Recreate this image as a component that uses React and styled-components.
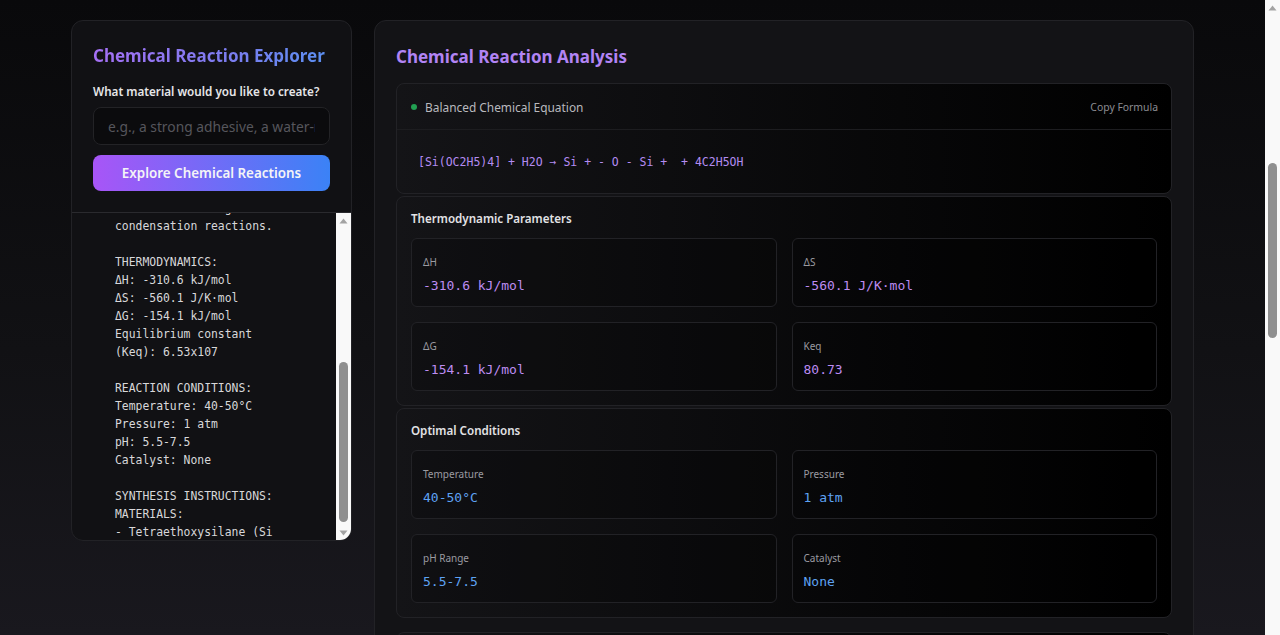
import React, { useLayoutEffect, useRef } from 'react';
import styled, { createGlobalStyle } from 'styled-components';

const GlobalStyle = createGlobalStyle`
  html, body {
    margin: 0;
    padding: 0;
    overflow: hidden;
  }
  body {
    background: #0d0d10;
    font-family: "Noto Sans", "Open Sans", sans-serif;
    color: #e4e4e7;
  }
`;

const outputText = [
  'MATERIAL: Silica Gel',
  '',
  'REACTION TYPE:',
  'Sol-gel process',
  '',
  'BALANCED EQUATION:',
  '[Si(OC2H5)4] + H2O → Si',
  '+ - O - Si +  + 4C2H5OH',
  '',
  'EXPLANATION:',
  'Tetraethoxysilane (TEOS)',
  'reacts with water to',
  'form cross-linked',
  'silica (Si-O-Si)',
  'structures through',
  'condensation reactions.',
  '',
  'THERMODYNAMICS:',
  'ΔH: -310.6 kJ/mol',
  'ΔS: -560.1 J/K·mol',
  'ΔG: -154.1 kJ/mol',
  'Equilibrium constant',
  '(Keq): 6.53x107',
  '',
  'REACTION CONDITIONS:',
  'Temperature: 40-50°C',
  'Pressure: 1 atm',
  'pH: 5.5-7.5',
  'Catalyst: None',
  '',
  'SYNTHESIS INSTRUCTIONS:',
  'MATERIALS:',
  '- Tetraethoxysilane (Si',
  '(OC2H5)4)',
].join('\n');

const thermo = [
  { label: 'ΔH', value: '-310.6 kJ/mol' },
  { label: 'ΔS', value: '-560.1 J/K·mol' },
  { label: 'ΔG', value: '-154.1 kJ/mol' },
  { label: 'Keq', value: '80.73' },
];

const conditions = [
  { label: 'Temperature', value: '40-50°C' },
  { label: 'Pressure', value: '1 atm' },
  { label: 'pH Range', value: '5.5-7.5' },
  { label: 'Catalyst', value: 'None' },
];

const steps = [
  'Mix tetraethoxysilane with ethanol in a clean beaker.',
  'Add water dropwise while stirring at 40-50°C.',
  'Keep the pH between 5.5 and 7.5 during hydrolysis.',
  'Let the sol age until a gel forms, then dry slowly.',
];

function ScrollRail({ thumbTop, thumbHeight, downArrow }) {
  return (
    <Rail>
      <ArrowSlot>
        <svg width="9" height="6" viewBox="0 0 9 6">
          <polygon points="4.5,0.5 8.5,5.5 0.5,5.5" fill="#a3a3a3" />
        </svg>
      </ArrowSlot>
      <Thumb top={thumbTop} size={thumbHeight} />
      {downArrow && (
        <ArrowSlot bottom>
          <svg width="9" height="6" viewBox="0 0 9 6">
            <polygon points="0.5,0.5 8.5,0.5 4.5,5.5" fill="#a3a3a3" />
          </svg>
        </ArrowSlot>
      )}
    </Rail>
  );
}

function App() {
  const outputRef = useRef(null);

  useLayoutEffect(() => {
    if (outputRef.current) outputRef.current.scrollTop = 278;
  }, []);

  return (
    <>
      <GlobalStyle />
      <Viewport>
        <Scroller>
          <Layout>
            <Sidebar>
              <SidebarForm>
                <SidebarTitle>Chemical Reaction Explorer</SidebarTitle>
                <FieldLabel>What material would you like to create?</FieldLabel>
                <MaterialInput placeholder="e.g., a strong adhesive, a water-resistant coating" />
                <ExploreButton>Explore Chemical Reactions</ExploreButton>
              </SidebarForm>
              <OutputArea>
                <OutputScroll ref={outputRef}>
                  <OutputText>{outputText}</OutputText>
                </OutputScroll>
                <ScrollRail thumbTop={134} thumbHeight={160} downArrow />
              </OutputArea>
            </Sidebar>

            <Main>
              <MainTitle>Chemical Reaction Analysis</MainTitle>

              <Card>
                <EquationHeader>
                  <HeaderLabel>
                    <Dot />
                    Balanced Chemical Equation
                  </HeaderLabel>
                  <CopyButton>Copy Formula</CopyButton>
                </EquationHeader>
                <EquationBody>{'[Si(OC2H5)4] + H2O → Si + - O - Si +  + 4C2H5OH'}</EquationBody>
              </Card>

              <Card>
                <SectionBody>
                  <SectionTitle>Thermodynamic Parameters</SectionTitle>
                  <StatGrid>
                    {thermo.map(item => (
                      <StatBox key={item.label}>
                        <StatLabel>{item.label}</StatLabel>
                        <StatValue tone="purple">{item.value}</StatValue>
                      </StatBox>
                    ))}
                  </StatGrid>
                </SectionBody>
              </Card>

              <Card>
                <SectionBody>
                  <SectionTitle>Optimal Conditions</SectionTitle>
                  <StatGrid>
                    {conditions.map(item => (
                      <StatBox key={item.label}>
                        <StatLabel>{item.label}</StatLabel>
                        <StatValue tone="blue">{item.value}</StatValue>
                      </StatBox>
                    ))}
                  </StatGrid>
                </SectionBody>
              </Card>

              <Card spaced>
                <SectionBody>
                  <SectionTitle>Synthesis Instructions</SectionTitle>
                  <StepList>
                    {steps.map((step, idx) => (
                      <li key={idx}>{step}</li>
                    ))}
                  </StepList>
                </SectionBody>
              </Card>
            </Main>
          </Layout>
        </Scroller>
        <ScrollRail thumbTop={148} thumbHeight={175} />
      </Viewport>
    </>
  );
}

export default App;

const Viewport = styled.div`
  display: grid;
  grid-template-columns: 1fr 15px;
  height: 100vh;
  overflow: hidden;
`;

const Scroller = styled.div`
  overflow: hidden;
  background: linear-gradient(180deg, #09090b 0%, #111114 55%, #19181e 100%);
`;

const Rail = styled.div`
  display: flex;
  flex-direction: column;
  align-items: center;
  background: #f9f9f9;
  overflow: hidden;
`;

const ArrowSlot = styled.div`
  flex: none;
  height: 15px;
  width: 15px;
  display: flex;
  align-items: center;
  justify-content: center;
  margin-top: ${props => (props.bottom ? 'auto' : '0')};
`;

const Thumb = styled.div`
  flex: none;
  width: 9px;
  height: ${props => props.size}px;
  margin-top: ${props => props.top}px;
  border-radius: 5px;
  background: #8f8f8f;
`;

const Layout = styled.div`
  width: 1123px;
  margin: 0 auto;
  padding: 20px 0 40px;
  display: grid;
  grid-template-columns: 281px 1fr;
  gap: 22px;
  align-items: start;
`;

const Sidebar = styled.aside`
  height: 521px;
  box-sizing: border-box;
  display: flex;
  flex-direction: column;
  background: #111114;
  border: 1px solid #222226;
  border-radius: 12px;
  overflow: hidden;
`;

const SidebarForm = styled.div`
  padding: 21px 21px 21px;
`;

const SidebarTitle = styled.h1`
  margin: 0 0 11px;
  font-size: 17px;
  line-height: 28px;
  font-weight: 700;
  background: linear-gradient(90deg, #a570f4 0%, #7d7cf0 55%, #5a8ff0 100%);
  -webkit-background-clip: text;
  background-clip: text;
  color: transparent;
  white-space: nowrap;
`;

const FieldLabel = styled.label`
  display: block;
  margin-bottom: 6px;
  font-size: 11.7px;
  line-height: 20px;
  font-weight: 600;
  color: #e6e6e8;
  white-space: nowrap;
`;

const MaterialInput = styled.input`
  display: block;
  width: 100%;
  height: 38px;
  box-sizing: border-box;
  padding: 0 14px;
  background: #0b0b0d;
  border: 1px solid #232326;
  border-radius: 8px;
  font-family: inherit;
  font-size: 13.8px;
  color: #e4e4e7;
  outline: none;
  &::placeholder {
    color: #56565c;
  }
`;

const ExploreButton = styled.button`
  display: block;
  width: 100%;
  height: 36px;
  margin-top: 10px;
  border: none;
  border-radius: 8px;
  background: linear-gradient(90deg, #a855f7 0%, #3b82f6 100%);
  color: #f4f4f6;
  font-family: inherit;
  font-size: 13.4px;
  font-weight: 600;
  cursor: pointer;
`;

const OutputArea = styled.div`
  flex: 1;
  min-height: 0;
  display: grid;
  grid-template-columns: 1fr 15px;
  border-top: 1px solid #2a2a2e;
`;

const OutputScroll = styled.div`
  min-height: 0;
  overflow: hidden;
`;

const OutputText = styled.pre`
  margin: 0;
  padding: 12px 16px 12px 43px;
  font-family: "DejaVu Sans Mono", "Liberation Mono", monospace;
  font-size: 11.4px;
  line-height: 18px;
  white-space: pre;
  color: #d8d8da;
`;

const Main = styled.main`
  background: #131316;
  border: 1px solid #222226;
  border-radius: 12px;
  padding: 22px 21px 22px;
`;

const MainTitle = styled.h2`
  margin: 0 0 12px;
  font-size: 17px;
  line-height: 28px;
  font-weight: 700;
  color: #b284f4;
`;

const Card = styled.section`
  margin-top: ${props => (props.spaced ? '14px' : '2px')};
  background: linear-gradient(90deg, #141417 0%, #000 100%);
  border: 1px solid #222226;
  border-radius: 8px;
  &:first-of-type {
    margin-top: 0;
  }
`;

const EquationHeader = styled.div`
  display: flex;
  align-items: center;
  justify-content: space-between;
  height: 45px;
  padding: 0 13px 0 14px;
  border-bottom: 1px solid #1d1d20;
`;

const HeaderLabel = styled.div`
  display: flex;
  align-items: center;
  gap: 8px;
  font-size: 11.9px;
  color: #b9b9be;
`;

const Dot = styled.span`
  width: 6px;
  height: 6px;
  border-radius: 50%;
  background: #22a052;
`;

const CopyButton = styled.button`
  border: none;
  background: none;
  padding: 0;
  font-family: inherit;
  font-size: 10.4px;
  color: #8c8c92;
  cursor: pointer;
`;

const EquationBody = styled.div`
  padding: 23px 21px 22px;
  font-family: "DejaVu Sans Mono", "Liberation Mono", monospace;
  font-size: 11.5px;
  line-height: 18px;
  white-space: pre;
  color: #b48cf2;
`;

const SectionBody = styled.div`
  padding: 13px 14px 14px;
`;

const SectionTitle = styled.h3`
  margin: 0 0 10px;
  font-size: 11.6px;
  line-height: 18px;
  font-weight: 600;
  color: #e2e2e5;
`;

const StatGrid = styled.div`
  display: grid;
  grid-template-columns: 1fr 1fr;
  gap: 15px;
`;

const StatBox = styled.div`
  padding: 15px 11px 10px;
  background: rgba(0, 0, 0, 0.18);
  border: 1px solid #222226;
  border-radius: 6px;
`;

const StatLabel = styled.div`
  font-size: 10px;
  line-height: 16px;
  color: #9b9ba1;
`;

const StatValue = styled.div`
  margin-top: 6px;
  font-family: "DejaVu Sans Mono", "Liberation Mono", monospace;
  font-size: 13px;
  line-height: 20px;
  color: ${props => (props.tone === 'blue' ? '#5ea2f3' : '#bd8cf2')};
`;

const StepList = styled.ol`
  margin: 0;
  padding-left: 20px;
  font-size: 12px;
  line-height: 22px;
  color: #c8c8cc;
`;
